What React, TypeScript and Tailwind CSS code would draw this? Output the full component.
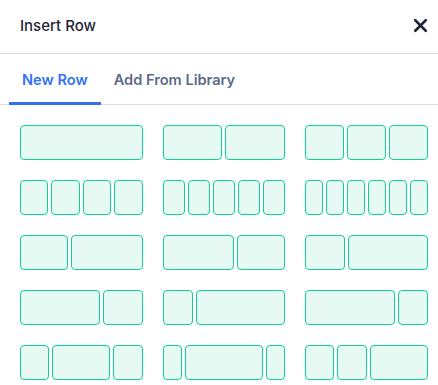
import { X } from "lucide-react";

// 各レイアウトは列の比率で表す
const layouts: number[][] = [
  [1],
  [1, 1],
  [1, 1, 1],
  [1, 1, 1, 1],
  [1, 1, 1, 1, 1],
  [1, 1, 1, 1, 1, 1],
  [2, 3],
  [3, 2],
  [1, 2],
  [2, 1],
  [1, 3],
  [3, 1],
  [1, 2, 1],
  [1, 4, 1],
  [1, 1, 2],
];

function LayoutOption({ cols }: { cols: number[] }) {
  return (
    <button
      className="grid h-[35px] w-full gap-[3px]"
      style={{ gridTemplateColumns: cols.map((c) => `minmax(0, ${c}fr)`).join(" ") }}
    >
      {cols.map((_, i) => (
        <div
          key={i}
          className="h-full rounded-[4px] border-[1.5px] border-[#10cf99] bg-[#e6faf3]"
        />
      ))}
    </button>
  );
}

export default function App() {
  return (
    <div className="w-[438px] h-[385px] bg-white font-['Inter','Noto_Sans',sans-serif] overflow-hidden">
      {/* ヘッダー */}
      <div className="flex h-[54px] items-center justify-between border-b border-[#dcdde4] pl-5 pr-[7px]">
        <span className="text-[15px] font-medium text-[#1f2637]">Insert Row</span>
        <X className="mb-[3px] h-[21px] w-[21px] text-[#1f2637]" strokeWidth={3} />
      </div>

      {/* タブ */}
      <div className="flex h-[51px] border-b border-[#dcdde4] pl-[9px]">
        <div className="relative flex items-center px-[13px] pt-[4px] text-[14.6px] font-semibold text-[#3271f5]">
          New Row
          <div className="absolute bottom-[-1px] left-0 right-0 h-[3px] bg-[#3271f5]" />
        </div>
        <div className="flex items-center px-[13px] pt-[4px] text-[14.6px] font-semibold text-[#5d6b8b]">
          Add From Library
        </div>
      </div>

      {/* レイアウト一覧 */}
      <div className="grid w-[428px] grid-cols-3 gap-x-5 gap-y-5 pl-5 pt-5">
        {layouts.map((cols, i) => (
          <LayoutOption key={i} cols={cols} />
        ))}
      </div>
    </div>
  );
}
